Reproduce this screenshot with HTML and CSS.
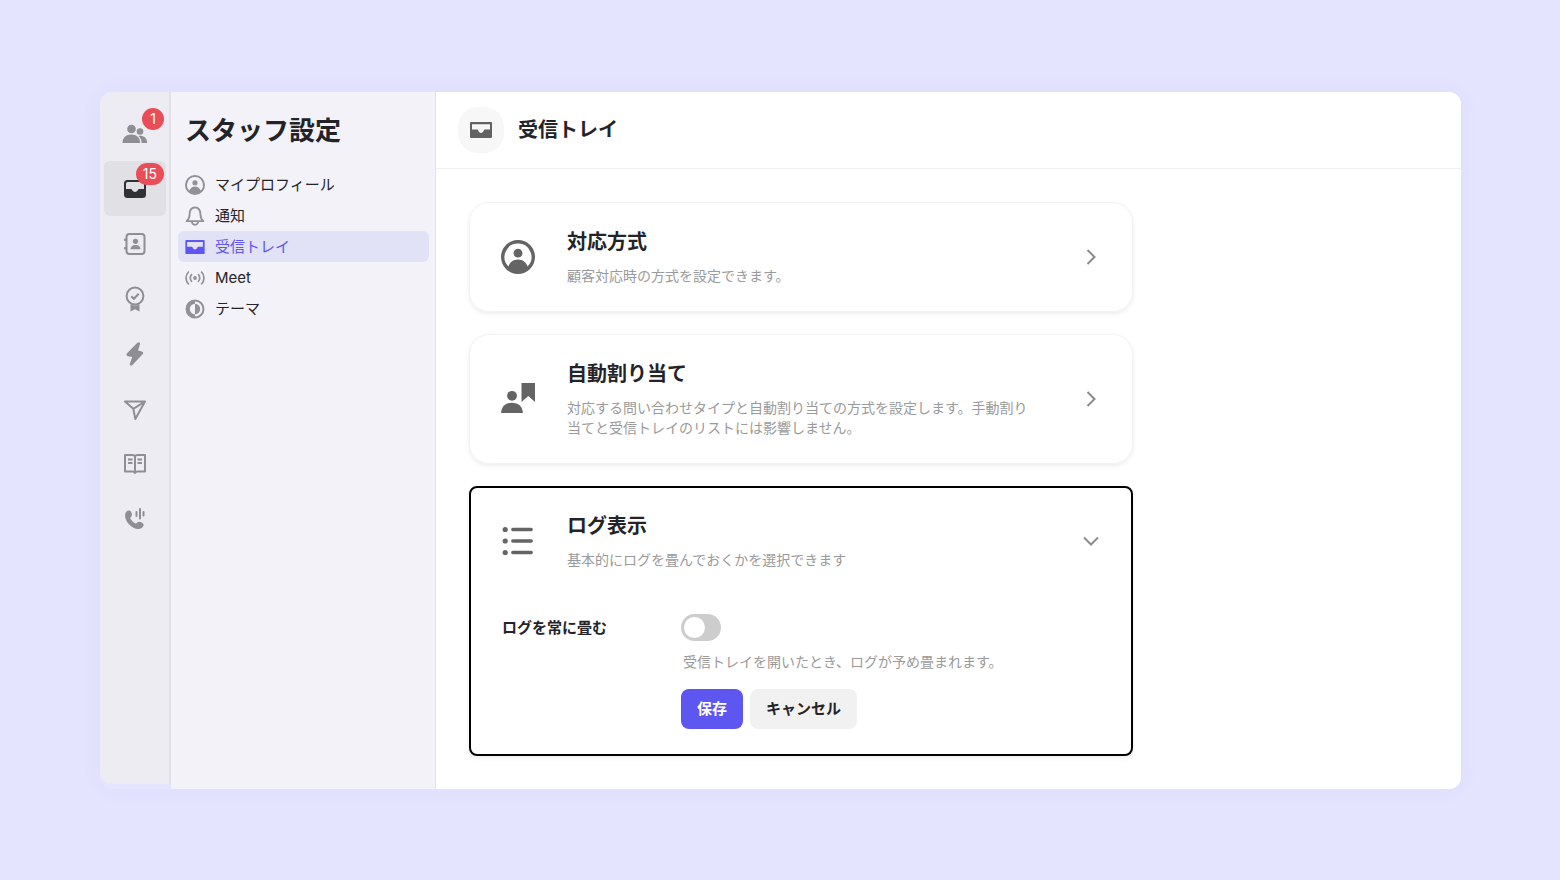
FILE: index.html
```html
<!DOCTYPE html>
<html lang="ja">

<head>
    <meta charset="UTF-8">
    <meta name="viewport" content="width=device-width, initial-scale=1.0">
    <title>受信トレイ</title>
    <link rel="stylesheet" href="styles.css">
</head>

<body>
    <!-- shared icons -->
    <svg width="0" height="0" class="sprite" aria-hidden="true">
        <symbol id="icon-profile" viewBox="0 0 34 34">
            <path fill-rule="evenodd" d="M17 0a17 17 0 1 1 0 34a17 17 0 0 1 0-34zM17 3.600a13.400 13.400 0 0 0-9.600 22.800c1.200-4.200 4.900-7 9.600-7s8.400 2.800 9.600 7A13.400 13.400 0 0 0 17 3.600z"/>
            <circle cx="17" cy="13.200" r="4.400"/>
        </symbol>
        <symbol id="icon-tray" viewBox="0 0 22 16">
            <path fill-rule="evenodd" d="M1 0h20q1 0 1 1v14q0 1-1 1H1q-1 0-1-1V1q0-1 1-1zM2 2.200v5.400h5.200c.5 0 .8.300 1 .8c.5 1.600 1.500 2.500 2.800 2.500s2.300-.9 2.800-2.500c.2-.5.5-.8 1-.8H20V2.200z"/>
        </symbol>
    </svg>

    <div class="app">
        <nav class="rail" aria-label="メイン">
            <a href="#" class="rail-item" aria-label="チャット">
                <svg width="26" height="20" viewBox="0 0 26 20" fill="currentColor">
                    <circle cx="9.500" cy="5" r="4.300"/>
                    <circle cx="18" cy="7.500" r="3.300"/>
                    <path d="M.5 19c0-5.500 3.600-8.500 8.800-8.500s8.800 3 8.800 8.500z"/>
                    <path d="M16.500 11.900c5-.6 8.700 2 8.700 7.100h-5.600c0-2.900-1.200-5.400-3.100-7.100z"/>
                </svg>
                <span class="badge">1</span>
            </a>
            <a href="#" class="rail-item active" aria-label="受信トレイ">
                <svg width="24" height="20" viewBox="0 0 24 20" fill="currentColor">
                    <path fill-rule="evenodd" d="M4.500 1h15Q23 1 23 4.500v11q0 3.500-3.500 3.500h-15Q1 19 1 15.500v-11Q1 1 4.500 1zM4.800 3Q3 3 3 4.800V10h4.800c.6 0 .9.300 1.200.8c.6 1.300 1.600 2.100 3 2.100s2.400-.8 3-2.100c.3-.5.600-.8 1.200-.8H21V4.800Q21 3 19.200 3z"/>
                </svg>
                <span class="badge">15</span>
            </a>
            <a href="#" class="rail-item" aria-label="連絡先">
                <svg width="24" height="24" viewBox="0 0 24 24" fill="currentColor">
                    <rect x="3.500" y="2" width="18" height="20" rx="3" fill="none" stroke="currentColor" stroke-width="2"/>
                    <rect x="1" y="6.500" width="3" height="2.600" rx="1"/>
                    <rect x="1" y="15" width="3" height="2.600" rx="1"/>
                    <circle cx="12.500" cy="9.300" r="2.600"/>
                    <path d="M7.500 17.200c.2-2.800 2.100-4.300 5-4.300s4.800 1.500 5 4.300z"/>
                </svg>
            </a>
            <a href="#" class="rail-item" aria-label="実績">
                <svg width="24" height="26" viewBox="0 0 24 26" fill="currentColor">
                    <circle cx="12" cy="10" r="8.400" fill="none" stroke="currentColor" stroke-width="2"/>
                    <path d="M8.300 10.200l2.600 2.600l4.800-5" fill="none" stroke="currentColor" stroke-width="2"/>
                    <path d="M7.500 18.500q4.500 1.800 9 0V25.500L12 23.200l-4.500 2.300z"/>
                </svg>
            </a>
            <a href="#" class="rail-item" aria-label="ワークフロー">
                <svg width="24" height="24" viewBox="0 0 24 24" fill="currentColor">
                    <path d="M14.400.8L4 11.300c-1.100 1.200-.5 2.600 1 2.900l4.200.8l-2.300 6.700c-.4 1.600 1.200 2.500 2.500 1.300L19.600 12.300c1.100-1.200.6-2.600-.9-2.900l-3.700-.8L17 2.300C17.400.5 15.700-.5 14.400.8z"/>
                </svg>
            </a>
            <a href="#" class="rail-item" aria-label="配信">
                <svg width="24" height="22" viewBox="0 0 24 22" fill="none" stroke="currentColor" stroke-width="2" stroke-linejoin="round">
                    <path d="M2 3.500h20L12.300 21L10.300 10.800zM10.300 10.800L22 3.500"/>
                </svg>
            </a>
            <a href="#" class="rail-item" aria-label="ドキュメント">
                <svg width="24" height="22" viewBox="0 0 24 22" fill="none" stroke="currentColor" stroke-width="2" stroke-linejoin="round">
                    <path d="M2 2h7q3 0 3 1.500Q12 2 15 2h7v16.500h-7.500q-1.500 0-2.500 1.500q-1-1.500-2.500-1.500H2zM12 3.500V20M5 6.500h4.500M5 10h4.500M14.500 6.500H19M14.500 10H19"/>
                </svg>
            </a>
            <a href="#" class="rail-item" aria-label="通話">
                <svg width="24" height="24" viewBox="0 0 24 24" fill="currentColor">
                    <path d="M3.300 4.700C4.700 3 7 3.100 8 4.700c1.200 2 1.500 3.800 0 5.200c-.8.700-.8 1.200-.3 2c1.100 1.900 2.500 3.300 4.500 4.300c.8.400 1.200.3 1.800-.4c1.300-1.500 3-1.300 5.200-.1c1.800 1 1.900 3 .5 4.400c-2.300 2.400-5.600 2.700-9.300.7c-4.100-2.300-7-5.700-8-9.700c-.6-2.500-.3-4.800.9-6.400z"/>
                    <path d="M13.500 5v4M17 2v9.500M20.500 5v3.500" fill="none" stroke="currentColor" stroke-width="2" stroke-linecap="round"/>
                </svg>
            </a>
        </nav>

        <aside class="sidebar">
            <h1>スタッフ設定</h1>
            <nav class="menu" aria-label="スタッフ設定">
                <a href="#" class="menu-item">
                    <svg width="20" height="20" fill="currentColor"><use href="#icon-profile"/></svg>
                    マイプロフィール
                </a>
                <a href="#" class="menu-item">
                    <svg width="20" height="20" viewBox="0 0 20 20" fill="none" stroke="currentColor" stroke-width="2">
                        <path d="M1.600 15.200c2.300-1.800 2.900-3.600 3-7C4.700 4.300 6.500 1.500 10 1.500s5.300 2.800 5.400 6.700c.1 3.400.7 5.200 3 7z" stroke-width="1.800" stroke-linejoin="round"/>
                        <path d="M6.800 15.500c.2 2.200 1.400 3.300 3.200 3.300s3-1.100 3.200-3.300" stroke-width="1.800"/>
                    </svg>
                    通知
                </a>
                <a href="#" class="menu-item active" aria-current="page">
                    <svg width="20" height="14" fill="currentColor"><use href="#icon-tray"/></svg>
                    受信トレイ
                </a>
                <a href="#" class="menu-item">
                    <svg width="20" height="20" viewBox="0 0 20 20" fill="none" stroke="currentColor" stroke-width="2">
                        <circle cx="10" cy="10" r="1.900" fill="currentColor" stroke="none"/>
                        <path d="M7 6.200a5 5 0 0 0 0 7.600M13 6.200a5 5 0 0 1 0 7.600M3.800 3.500c-3.700 3.800-3.700 9.200 0 13M16.200 3.500c3.700 3.800 3.700 9.200 0 13" stroke-width="1.700"/>
                    </svg>
                    Meet
                </a>
                <a href="#" class="menu-item">
                    <svg width="20" height="20" viewBox="0 0 20 20" fill="currentColor">
                        <circle cx="10" cy="10" r="8.500" fill="none" stroke="currentColor" stroke-width="2"/>
                        <path d="M10 1a9 9 0 0 0 0 18v-3.800a5.200 5.200 0 0 1 0-10.400z"/>
                        <path d="M10 4.800a5.200 5.200 0 0 1 0 10.400z"/>
                    </svg>
                    テーマ
                </a>
            </nav>
        </aside>

        <main class="main">
            <header class="main-header">
                <span class="header-icon">
                    <svg width="22" height="16" fill="currentColor"><use href="#icon-tray"/></svg>
                </span>
                <h2>受信トレイ</h2>
            </header>

            <div class="cards">
                <section class="card">
                    <button type="button" class="card-head" aria-expanded="false">
                        <svg width="34" height="34" fill="currentColor"><use href="#icon-profile"/></svg>
                        <span class="card-text">
                            <span class="card-title">対応方式</span>
                            <span class="card-desc">顧客対応時の方式を設定できます。</span>
                        </span>
                        <svg class="chevron" width="16" height="16" viewBox="0 0 16 16"><path d="M4.500 1l7 7l-7 7"/></svg>
                    </button>
                </section>

                <section class="card">
                    <button type="button" class="card-head" aria-expanded="false">
                        <svg width="34" height="34" viewBox="0 0 34 34" fill="currentColor">
                            <circle cx="11" cy="13.800" r="4.900"/>
                            <path d="M0 31c.6-6.800 4.700-10.300 11-10.300S21.400 24.200 22 31z"/>
                            <path d="M20.500 1H34v19l-6.700-6l-6.800 6z"/>
                        </svg>
                        <span class="card-text">
                            <span class="card-title">自動割り当て</span>
                            <span class="card-desc">対応する問い合わせタイプと自動割り当ての方式を設定します。手動割り当てと受信トレイのリストには影響しません。</span>
                        </span>
                        <svg class="chevron" width="16" height="16" viewBox="0 0 16 16"><path d="M4.500 1l7 7l-7 7"/></svg>
                    </button>
                </section>

                <section class="card open">
                    <button type="button" class="card-head" aria-expanded="true">
                        <svg width="34" height="34" viewBox="0 0 34 34" fill="currentColor">
                            <circle cx="4.200" cy="5.500" r="2.600"/>
                            <circle cx="4.200" cy="17" r="2.600"/>
                            <circle cx="4.200" cy="28.500" r="2.600"/>
                            <path d="M11.800 5.500h18.400M11.800 17h18.400M11.800 28.500h18.400" stroke="currentColor" stroke-width="3.400" stroke-linecap="round"/>
                        </svg>
                        <span class="card-text">
                            <span class="card-title">ログ表示</span>
                            <span class="card-desc">基本的にログを畳んでおくかを選択できます</span>
                        </span>
                        <svg class="chevron" width="16" height="16" viewBox="0 0 16 16"><path d="M1 4.500l7 7l7-7"/></svg>
                    </button>
                    <form class="setting">
                        <label for="fold-log">ログを常に畳む</label>
                        <div class="setting-body">
                            <input type="checkbox" id="fold-log" class="switch" aria-describedby="fold-log-hint">
                            <p id="fold-log-hint">受信トレイを開いたとき、ログが予め畳まれます。</p>
                            <div class="buttons">
                                <button type="button" class="btn primary">保存</button>
                                <button type="button" class="btn">キャンセル</button>
                            </div>
                        </div>
                    </form>
                </section>
            </div>
        </main>
    </div>
</body>

</html>
```
FILE: styles.css
```css
* {
    box-sizing: border-box;
}

body {
    margin: 0;
    padding: 92px 99px 91px 100px;
    background-color: #e4e4ff;
    color: #242428;
    font-family: Inter, "Noto Sans CJK JP", sans-serif;
    font-size: 15px;
}

h1,
h2,
p {
    margin: 0;
}

a {
    color: inherit;
    text-decoration: none;
}

button {
    font: inherit;
    color: inherit;
    border: none;
    cursor: pointer;
}

svg {
    flex: none;
}

.sprite {
    display: none;
}

.app {
    display: flex;
    border-radius: 12px;
    box-shadow: 0 0 24px rgba(80, 80, 230, 0.04);
}

/* icon rail */
.rail {
    width: 71px;
    margin-bottom: 5px;
    padding: 14px 3px 0 4px;
    background-color: #edecf2;
    border-right: 2px solid #e1e0e6;
    border-radius: 12px 0 0 12px;
    color: #8f8e94;
}

.rail-item {
    position: relative;
    display: flex;
    align-items: center;
    justify-content: center;
    height: 55px;
    border-radius: 6px;
}

.rail-item.active {
    background-color: #e1e0e5;
    color: #303134;
}

.badge {
    position: absolute;
    top: 2px;
    right: 2px;
    min-width: 22px;
    height: 22px;
    padding: 0 7px;
    border-radius: 11px;
    background-color: #e94e58;
    color: #fff;
    font-size: 14px;
    line-height: 22px;
    text-align: center;
}

/* settings menu */
.sidebar {
    width: 265px;
    padding: 20px 6px 0 7px;
    background-color: #f3f2f9;
    border-right: 1px solid #e3e2e8;
}

.sidebar h1 {
    margin-bottom: 19px;
    padding-left: 7px;
    font-size: 26px;
    line-height: 38px;
}

.menu-item {
    display: flex;
    align-items: center;
    gap: 10px;
    height: 31px;
    padding: 0 7px;
    border-radius: 6px;
    line-height: 20px;
}

.menu-item svg {
    color: #929196;
}

.menu-item.active {
    background-color: #e1e2f6;
    color: #5e56f0;
}

.menu-item.active svg {
    color: #5e56f0;
}

/* content */
.main {
    flex: 1;
    min-width: 0;
    background-color: #fff;
    border-radius: 0 12px 12px 0;
}

.main-header {
    display: flex;
    align-items: center;
    gap: 14px;
    height: 77px;
    padding: 0 22px;
    border-bottom: 1px solid #f1f1f1;
}

.header-icon {
    display: flex;
    align-items: center;
    justify-content: center;
    width: 46px;
    height: 46px;
    border-radius: 20px;
    background-color: #f7f7f7;
    color: #626262;
}

.main-header h2 {
    font-size: 20px;
    line-height: 28px;
}

.cards {
    display: flex;
    flex-direction: column;
    gap: 22px;
    max-width: 730px;
    padding: 33px;
}

.card {
    border: 1px solid #f3f3f3;
    border-radius: 20px;
    box-shadow: 0 2px 4px rgba(0, 0, 0, 0.08);
}

.card.open {
    border: 2px solid #000;
    border-radius: 8px;
}

.card-head {
    display: flex;
    align-items: center;
    gap: 32px;
    width: 100%;
    padding: 25px 33px 25px 31px;
    background: none;
    text-align: left;
}

.open .card-head {
    padding: 24px 32px 24px 30px;
}

.card-head > svg {
    color: #646464;
}

.card-text {
    display: flex;
    flex: 1;
    flex-direction: column;
    gap: 10px;
}

.card-title {
    font-size: 20px;
    font-weight: 700;
    line-height: 28px;
}

.card-desc,
.setting p {
    color: #9a9a9a;
    font-size: 14px;
    font-weight: 400;
    line-height: 20px;
}

.card-head .chevron {
    margin-left: 10px;
    fill: none;
    stroke: #8c8c8c;
    stroke-width: 2;
}

.setting {
    display: flex;
    padding: 20px 31px 25px;
}

.setting label {
    width: 179px;
    font-weight: 700;
    line-height: 27px;
}

.switch {
    appearance: none;
    display: block;
    width: 40px;
    height: 27px;
    margin: 0;
    padding: 3px;
    border-radius: 14px;
    background-color: #cdcdcd;
    cursor: pointer;
}

.switch::before {
    content: "";
    display: block;
    width: 21px;
    height: 21px;
    border-radius: 50%;
    background-color: #fff;
}

.switch:checked {
    background-color: #5e56f0;
}

.switch:checked::before {
    margin-left: auto;
}

.setting p {
    margin: 11px 0 17px;
    padding-left: 2px;
}

.buttons {
    display: flex;
    gap: 7px;
}

.btn {
    height: 40px;
    padding: 0 16px;
    border-radius: 8px;
    background-color: #f1f1f1;
    font-weight: 700;
    line-height: 20px;
}

.btn.primary {
    background-color: #5e56f0;
    color: #fff;
}
```
